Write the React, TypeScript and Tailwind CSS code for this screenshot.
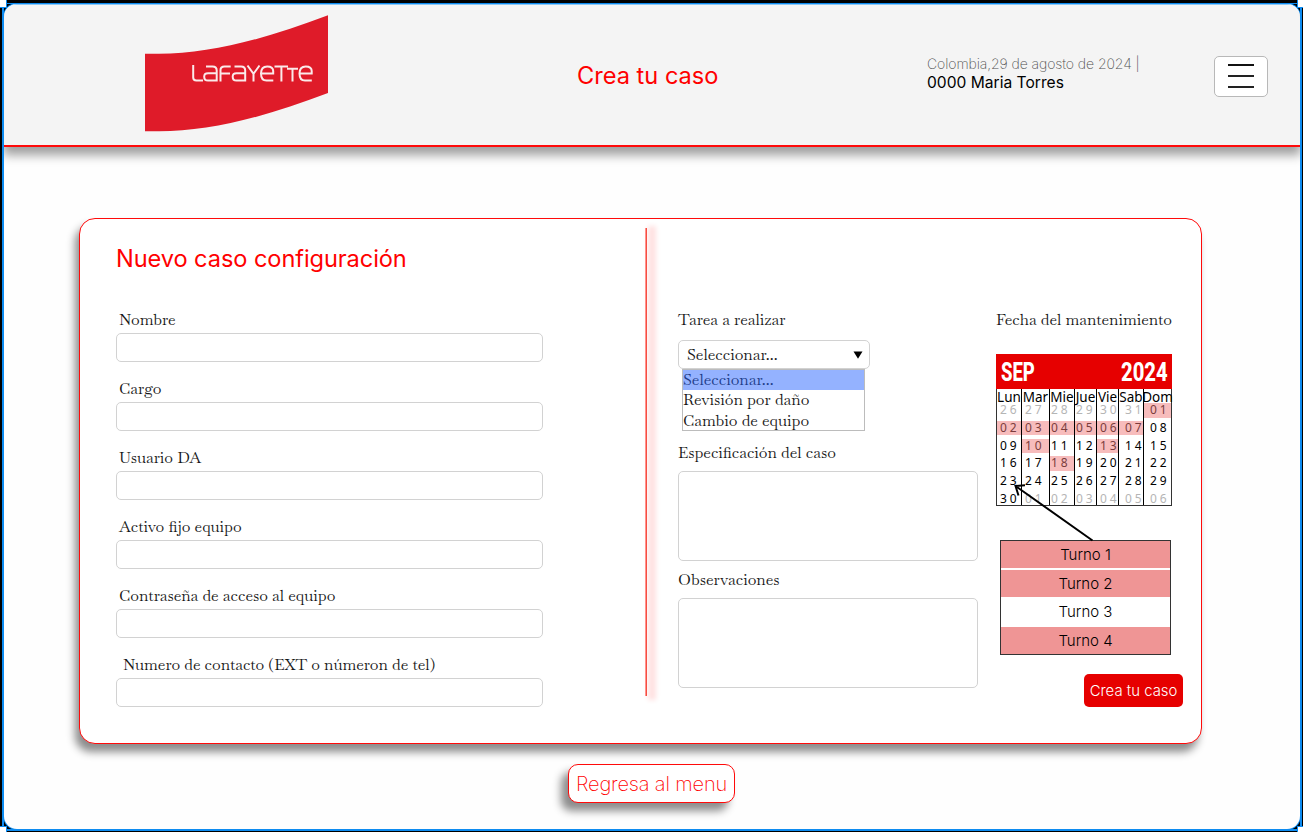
const serif = "font-['Baskervville','Liberation_Serif',serif] text-[15.8px] leading-5 text-[#171717]";

const fields = [
  { label: 'Nombre', indent: 'pl-[3px]' },
  { label: 'Cargo', indent: 'pl-[3px]' },
  { label: 'Usuario DA', indent: 'pl-[3px]' },
  { label: 'Activo fijo equipo', indent: 'pl-[3px]' },
  { label: 'Contraseña de acceso al equipo', indent: 'pl-[3px]' },
  { label: 'Numero de contacto (EXT o númeron de tel)', indent: 'pl-[7px]' },
];

const days = ['Lun', 'Mar', 'Mie', 'Jue', 'Vie', 'Sab', 'Dom'];
const weeks = [
  ['26', '27', '28', '29', '30', '31', '01'],
  ['02', '03', '04', '05', '06', '07', '08'],
  ['09', '10', '11', '12', '13', '14', '15'],
  ['16', '17', '18', '19', '20', '21', '22'],
  ['23', '24', '25', '26', '27', '28', '29'],
  ['30', '01', '02', '03', '04', '05', '06'],
];
const busy = ['0-6', '1-0', '1-1', '1-2', '1-3', '1-4', '1-5', '2-1', '2-4', '3-2'];
const indent = ['pl-[3px]', 'pl-[3px]', 'pl-px', 'pl-px', 'pl-[3px]', 'pl-[6px]', 'pl-[6px]'];

const shifts = [
  { name: 'Turno 1', style: 'h-[27px] pt-[2px] bg-[#ef9595]' },
  { name: 'Turno 2', style: 'h-[27px] mt-[2px] pt-px bg-[#ef9595]' },
  { name: 'Turno 3', style: 'h-[30px] bg-white' },
  { name: 'Turno 4', style: 'h-[27px] pt-px bg-[#ef9595]' },
];

function Handle({ place }: { place: string }) {
  return <span className={`absolute size-[9px] border border-[#0d8bf0] bg-white ${place}`} />;
}

function Logo() {
  return (
    <svg className="ml-[141px] mt-[11px] h-[117px] w-[184px] shrink-0" viewBox="0 0 184 117">
      <path d="M0 38.800H14C65 38.800 120 24 183 0.300V78C120 102 65 116.300 14 116.300H0Z" fill="#df1b29" />
      <g fill="none" stroke="#fbeaea" strokeWidth="2">
        <path d="M48.200 50V62.500Q48.200 65.600 51.400 65.600H58" />
        <path d="M61 51.400H67.500Q71.700 51.400 71.700 55.500V65.600H63Q59.200 65.600 59.200 61.700Q59.200 58.300 63 58.300H71.700" />
        <path d="M75.500 66.400V55Q75.500 51.400 79.500 51.400H85.700M75.500 58.500H85" />
        <path d="M89.500 51.400H96Q100.200 51.400 100.200 55.500V65.600H91.500Q87.700 65.600 87.700 61.700Q87.700 58.300 91.500 58.300H100.200" />
        <path d="M102.500 50.500L108.500 58.800L114.500 50.500M108.500 58.500V66.400" />
        <path d="M128.300 65.600H121.500Q116 65.600 116 58.500Q116 51.400 122.200 51.400Q128.200 51.400 128.200 56V58.600H116.200" />
        <path d="M129.500 51.400H143M136.400 51.400V66.400M142 53.700H153M147.500 53.700V66.400" />
        <path d="M166.800 65.600H160Q154.500 65.600 154.500 58.500Q154.500 51.400 160.700 51.400Q166.700 51.400 166.700 56V58.600H154.700" />
      </g>
    </svg>
  );
}

function Calendar() {
  return (
    <div className="relative mt-[24px] w-[176px]">
      <div className="flex h-[35px] items-center justify-between bg-[#e60000] pl-[5px] pr-[4px] pt-px font-['Roboto',sans-serif] text-[25px] font-extrabold leading-none text-white">
        <span className="w-[35px] origin-left scale-x-[0.74]">SEP</span>
        <span className="origin-right scale-x-[0.81]">2024</span>
      </div>
      <div className="grid h-[117px] grid-cols-[25px_28px_25px_22px_22px_25px_27px] border border-t-0 border-[#333]">
        {days.map((day, c) => (
          <div key={day} className={`h-[116px] ${c < 6 ? 'border-r border-black' : ''}`}>
            <div className="flex h-[14px] justify-center whitespace-nowrap pt-px font-['Noto_Sans',sans-serif] text-[13.500px] leading-[14px] text-black">
              {day}
            </div>
            {weeks.map((week, r) => {
              const muted = (r === 0 && c < 6) || (r === 5 && c > 0);
              const marked = busy.includes(`${r}-${c}`);
              return (
                <div key={r} className="h-[17.8px]">
                  <div
                    className={`h-[14.500px] whitespace-nowrap font-['Noto_Sans',sans-serif] text-[12px] leading-[14px] tracking-[3px] ${indent[c]} ${
                      marked ? 'bg-[#f7bcbc] text-[#7b3c3c]' : muted ? 'text-[#b5b5b5]' : 'text-black'
                    }`}
                  >
                    {week[c]}
                  </div>
                </div>
              );
            })}
          </div>
        ))}
      </div>
      <svg className="absolute left-[17px] top-[129px] h-[60px] w-[84px]" viewBox="0 0 84 60" fill="none" stroke="black" strokeWidth="2">
        <path d="M2.500 3L79.500 57.500M12 2.300L2.500 3L5.500 12.500" />
      </svg>
    </div>
  );
}

export default function App() {
  return (
    <div className="relative h-[832px] w-[1303px] overflow-hidden bg-black pb-[1px] pl-[2px] pr-[1px] pt-[3px] font-['Inter',sans-serif]">
      <div className="h-full border-b-2 border-l-2 border-r-2 border-t border-[#0d8bf0] bg-black">
        <main className="h-full w-full overflow-hidden rounded-[13px] bg-[#fefefe] shadow-[0_0_0_1px_#0d8bf0]">
          <header className="relative flex h-[143px] border-b-2 border-[#ff0a0a] bg-[#f4f4f4] shadow-[0_7px_10px_1px_rgba(0,0,0,0.38),inset_0_1px_0_0_#8cc8f5]">
            <Logo />
            <h1 className="ml-[248px] mt-[57px] w-[150px] whitespace-nowrap text-[23.600px] leading-[30px] text-[#ff0000]">Crea tu caso</h1>
            <div className="ml-[200px] mt-[51px] w-[220px] whitespace-nowrap">
              <p className="text-[14px] font-[250] leading-[18px] tracking-[-0.08px] text-[#505050]">Colombia,29 de agosto de 2024 |</p>
              <p className="text-[15.600px] leading-[19px] text-black">0000 Maria Torres</p>
            </div>
            <button className="ml-[67px] mt-[52px] flex h-[41px] w-[54px] flex-col items-center justify-center gap-[9px] rounded-[5px] border border-[#b8b8b8] bg-white pb-px">
              <span className="h-[2px] w-[26px] bg-[#111]" />
              <span className="h-[2px] w-[26px] bg-[#222]" />
              <span className="h-[2px] w-[26px] bg-[#222]" />
            </button>
          </header>

          <section className="ml-[75px] mt-[71px] flex h-[526px] w-[1123px] rounded-[16px] border border-[#ff0a0a] bg-white shadow-[-4px_8px_8px_0_rgba(0,0,0,0.45)]">
            <div className="w-[565px] pl-[36px] pt-[25px]">
              <h2 className="whitespace-nowrap text-[23.600px] leading-[30px] tracking-[-0.08px] text-[#ff0000]">Nuevo caso configuración</h2>
              <form className="mt-[36px] flex flex-col">
                {fields.map((f) => (
                  <label key={f.label} className="block h-[69px]">
                    <span className={`block h-[23px] whitespace-nowrap ${serif} ${f.indent}`}>{f.label}</span>
                    <input className="block h-[29px] w-[427px] rounded-[5px] border border-[#d2d2d2] bg-white outline-none" />
                  </label>
                ))}
              </form>
            </div>

            <div className="mt-[9px] h-[468px] w-[2px] bg-gradient-to-r from-[#ffb0b0] to-[#f00000] shadow-[6px_1px_5px_3px_rgba(255,0,0,0.12)]" />

            <div className="ml-[31px] w-[317px] pt-[91px]">
              <p className={serif}>Tarea a realizar</p>
              <div className={`mt-[10px] flex h-[29px] w-[192px] items-center justify-between rounded-[5px] border border-[#d2d2d2] pl-2 pr-[6px] ${serif}`}>
                <span>Seleccionar...</span>
                <svg className="mt-px h-[8px] w-[10px]" viewBox="0 0 10 8"><path d="M0.500 0.500H9.500L5 7.800Z" /></svg>
              </div>
              <div className={`ml-[4px] h-[62px] w-[183px] border border-[#bcbcbc] ${serif}`}>
                <p className="h-[20px] bg-[#94b2ff] leading-[19px] text-[#203c88]">Seleccionar...</p>
                <p className="h-[21px] leading-[20px]">Revisión por daño</p>
                <p className="h-[20px] leading-[20px]">Cambio de equipo</p>
              </div>
              <p className={`mt-[12px] ${serif}`}>Especificación del caso</p>
              <div className="mt-[8px] h-[90px] w-[300px] rounded-[5px] border border-[#d2d2d2]" />
              <p className={`mt-[9px] ${serif}`}>Observaciones</p>
              <div className="mt-[8px] h-[90px] w-[300px] rounded-[5px] border border-[#d2d2d2]" />
            </div>

            <div className="ml-px w-[190px] pt-[91px]">
              <p className={`whitespace-nowrap ${serif}`}>Fecha del mantenimiento</p>
              <Calendar />
              <div className="ml-[4px] mt-[34px] h-[115px] w-[171px] border border-[#333] bg-white text-center text-[15px] font-[360] text-black">
                {shifts.map((s) => (
                  <div key={s.name} className={`flex items-center justify-center ${s.style}`}>{s.name}</div>
                ))}
              </div>
              <button className="ml-[88px] mt-[19px] block h-[33px] w-[99px] whitespace-nowrap rounded-[5px] bg-[#e60000] pt-px text-center text-[14.900px] font-[360] text-white">
                Crea tu caso
              </button>
            </div>
          </section>

          <button className="ml-[564px] mt-[20px] block h-[39px] w-[167px] whitespace-nowrap rounded-[10px] border border-[#ff0a0a] bg-white text-[20px] font-[220] tracking-[-0.15px] text-[#ff0000] shadow-[-7px_8px_8px_0_rgba(0,0,0,0.45)]">
            Regresa al menu
          </button>
        </main>
      </div>
      <Handle place="-left-[2px] -top-[1px]" />
      <Handle place="-right-[3px] -top-[1px]" />
      <Handle place="-left-[2px] -bottom-[3px]" />
      <Handle place="-right-[3px] -bottom-[3px]" />
    </div>
  );
}
